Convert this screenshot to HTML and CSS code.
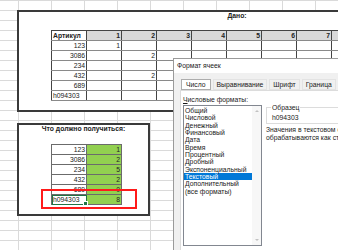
FILE: index.html
```html
<!DOCTYPE html>
<html lang="ru">
<head>
<meta charset="utf-8">
<title>Формат ячеек</title>
<link rel="stylesheet" href="styles.css">
</head>
<body>
<div class="sheet">
  <section class="box given">
    <div class="box-title">Дано:</div>
    <table class="t1">
      <tr class="head"><td class="art">Артикул</td><td>1</td><td>2</td><td>3</td><td>4</td><td>5</td><td>6</td><td>7</td><td>8</td></tr>
      <tr><td>123</td><td>1</td><td></td><td></td><td></td><td></td><td></td><td></td><td></td></tr>
      <tr><td>3086</td><td></td><td>2</td><td></td><td></td><td></td><td></td><td></td><td></td></tr>
      <tr><td>234</td><td></td><td></td><td></td><td></td><td></td><td></td><td></td><td></td></tr>
      <tr><td>432</td><td></td><td>2</td><td></td><td></td><td></td><td></td><td></td><td></td></tr>
      <tr><td>689</td><td></td><td></td><td></td><td></td><td></td><td></td><td></td><td></td></tr>
      <tr><td class="txt">h094303</td><td></td><td></td><td></td><td></td><td></td><td></td><td></td><td></td></tr>
    </table>
  </section>
  <section class="box result">
    <div class="box-title">Что должно получиться:</div>
    <table class="t2">
      <tr><td>123</td><td class="g">1</td></tr>
      <tr><td>3086</td><td class="g">2</td></tr>
      <tr><td>234</td><td class="g">5</td></tr>
      <tr><td>432</td><td class="g">2</td></tr>
      <tr><td>689</td><td class="g">0</td></tr>
      <tr><td class="txt sel">h094303</td><td class="g">8</td></tr>
    </table>
  </section>
</div>
<div class="red-mark"></div>
<div class="dialog">
  <div class="dlg-title">Формат ячеек</div>
  <div class="tabs">
    <div class="tab active">Число</div>
    <div class="tab">Выравнивание</div>
    <div class="tab">Шрифт</div>
    <div class="tab">Граница</div>
    <div class="tab">Заливка</div>
  </div>
  <div class="panel">
    <div class="formats">
      <div class="label"><u>Ч</u>исловые форматы:</div>
      <div class="listbox">
        <ul class="items">
          <li>Общий</li>
          <li>Числовой</li>
          <li>Денежный</li>
          <li>Финансовый</li>
          <li>Дата</li>
          <li>Время</li>
          <li>Процентный</li>
          <li>Дробный</li>
          <li>Экспоненциальный</li>
          <li class="on">Текстовый</li>
          <li>Дополнительный</li>
          <li>(все форматы)</li>
        </ul>
        <div class="scroll"><span class="up"></span><span class="down"></span></div>
      </div>
    </div>
    <div class="sample-col">
      <fieldset class="sample">
        <legend>Образец</legend>
        <div class="sample-val">h094303</div>
      </fieldset>
      <p class="note">Значения в текстовом формате<br>обрабатываются как строки</p>
    </div>
  </div>
</div>
</body>
</html>
```
FILE: styles.css
```css
html, body {
  margin: 0;
  padding: 0;
  width: 338px;
  height: 250px;
  overflow: hidden;
  background: #fff;
}
body {
  position: relative;
  font-family: "Liberation Sans", Arial, sans-serif;
}
.sheet {
  width: 338px;
  height: 250px;
  box-sizing: border-box;
  padding: 10px 0 0 17px;
  background-image:
    linear-gradient(to right, #dadada 1px, transparent 1px),
    linear-gradient(to bottom, #dadada 1px, transparent 1px);
  background-size: 33px 10px;
  background-position: 18px 0, 0 0;
  font-size: 6.8px;
  color: #222;
}
.box {
  border: 2px solid #3a3a3a;
  box-sizing: border-box;
  background: #fff;
}
.given {
  width: 440px;
  height: 102px;
}
.result {
  width: 133px;
  height: 93px;
  margin-top: 11px;
}
.box-title {
  font-weight: bold;
  text-align: center;
  height: 8px;
  line-height: 8px;
}
.given .box-title {
  width: 436px;
}
.t1, .t2 {
  border-collapse: collapse;
  table-layout: fixed;
  margin-left: 32px;
}
.t1 { margin-top: 10px; }
.t2 { margin-top: 11px; }
.t1 td, .t2 td {
  width: 32px;
  height: 9px;
  padding: 0 1px;
  border: 1px solid #555;
  text-align: right;
  line-height: 9px;
  white-space: nowrap;
  overflow: visible;
}
.t1 td { border-color: #444 #444 #8a8a8a #444; }
.t1 .head td {
  background: #d9d9d9;
  font-weight: bold;
}
.t1 .head td.art {
  background: #fff;
  text-align: left;
}
td.txt { text-align: left; }
.t2 td { border-color: #6b6b6b; }
.t2 td.g { background: #92d050; }
td.sel {
  position: relative;
  outline: 1px solid #217346;
  outline-offset: -1px;
}
td.sel::after {
  content: "";
  position: absolute;
  right: -2px;
  bottom: -2px;
  width: 3px;
  height: 3px;
  background: #217346;
  border: 1px solid #fff;
}
.red-mark {
  position: absolute;
  left: 41px;
  top: 189px;
  width: 96px;
  height: 20px;
  box-sizing: border-box;
  border: 2px solid #ff1a1a;
}
.dialog {
  position: absolute;
  left: 173px;
  top: 58px;
  width: 200px;
  height: 200px;
  border: 1px solid #9a9a9a;
  background: #f0f0f0;
  font-size: 6.8px;
  color: #1a1a1a;
}
.dlg-title {
  height: 14px;
  line-height: 14px;
  padding-left: 3px;
  background: #fff;
}
.tabs {
  display: flex;
  gap: 2px;
  margin: 6px 0 0 7px;
  height: 11px;
}
.tab {
  padding: 0 3px;
  line-height: 9px;
  border: 1px solid #e3e3e3;
  background: #f0f0f0;
  white-space: nowrap;
}
.tab.active {
  background: #fff;
  border-color: #adadad;
  padding: 0 4px;
}
.panel {
  display: flex;
  gap: 4px;
  margin-left: 6px;
  height: 170px;
  padding: 5px 0 0 2px;
  border: 1px solid #dcdcdc;
  background: #fff;
}
.label { line-height: 8px; }
.listbox {
  display: flex;
  width: 79px;
  height: 141px;
  margin-top: 1px;
  box-sizing: border-box;
  border: 1px solid #828790;
  background: #fff;
}
.items {
  list-style: none;
  margin: 0;
  padding: 1px 0 0 0;
  flex: 1;
}
.items li {
  line-height: 7.35px;
  height: 7.35px;
  padding-left: 1px;
  white-space: nowrap;
}
.items li.on {
  background: #0078d7;
  color: #fff;
}
.scroll {
  width: 9px;
  display: flex;
  flex-direction: column;
  justify-content: space-between;
  align-items: center;
  padding: 4px 0;
  background: #f7f7f7;
}
.scroll span {
  width: 0;
  height: 0;
  border-left: 2px solid transparent;
  border-right: 2px solid transparent;
}
.scroll .up { border-bottom: 2px solid #c2c2c2; }
.scroll .down { border-top: 2px solid #c2c2c2; }
.sample-col { flex: 1; }
.sample {
  margin: 8px 0 0 0;
  padding: 2px 0 1px 5px;
  border: 1px solid #dcdcdc;
  border-right: none;
}
.sample legend {
  padding: 0 1px;
  margin-left: -1px;
  line-height: 7px;
}
.sample-val { line-height: 9px; }
.note {
  margin: 2px 0 0 0;
  line-height: 7.5px;
  white-space: nowrap;
}
```
